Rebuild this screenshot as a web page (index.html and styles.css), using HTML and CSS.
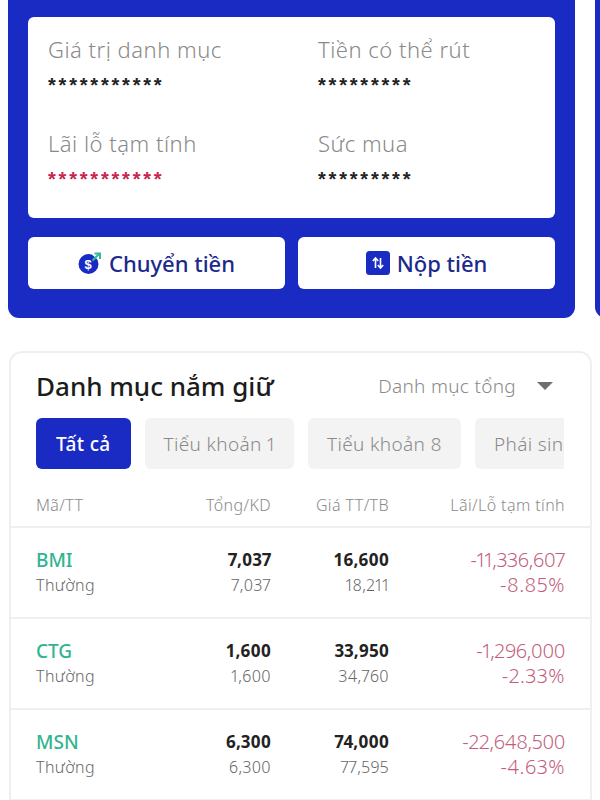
FILE: index.html
```html
<!DOCTYPE html>
<html lang="vi">
<head>
<meta charset="utf-8">
<title>Danh mục nắm giữ</title>
<link rel="stylesheet" href="styles.css">
</head>
<body>
<div class="carousel">
  <section class="blue">
    <div class="summary">
      <div class="stat"><div class="label">Giá trị danh mục</div><div class="mask">***********</div></div>
      <div class="stat"><div class="label">Tiền có thể rút</div><div class="mask">*********</div></div>
      <div class="stat"><div class="label">Lãi lỗ tạm tính</div><div class="mask red">***********</div></div>
      <div class="stat"><div class="label">Sức mua</div><div class="mask">*********</div></div>
    </div>
    <div class="actions">
      <button class="action">
        <svg class="ic" width="24" height="24" viewBox="0 0 24 24">
          <circle cx="10.5" cy="13" r="10" fill="#1a2bc4"/>
          <path d="M14 3.5h9v8z" fill="#fff"/>
          <path d="M14.5 9.5 L21 3 M16.5 2.5 H22 V8" fill="none" stroke="#35b89a" stroke-width="2"/>
          <text x="10" y="18" class="dollar">$</text>
        </svg>
        Chuyển tiền
      </button>
      <button class="action">
        <svg class="ic" width="24" height="24" viewBox="0 0 24 24">
          <rect x="0" y="0" width="24" height="24" rx="3.5" fill="#1a2bc4"/>
          <path d="M9.5 17V7.5M6.8 10 9.5 7l2.7 3M14.5 7v9.5M11.8 14l2.7 3 2.7-3" fill="none" stroke="#fff" stroke-width="1.6"/>
        </svg>
        Nộp tiền
      </button>
    </div>
  </section>
  <section class="blue"></section>
</div>

<section class="holdings">
  <div class="head">
    <h2 class="title">Danh mục nắm giữ</h2>
    <div class="picker">Danh mục tổng <span class="caret"></span></div>
  </div>
  <div class="tabs">
    <div class="tab on">Tất cả</div>
    <div class="tab">Tiểu khoản 1</div>
    <div class="tab">Tiểu khoản 8</div>
    <div class="tab">Phái sinh</div>
  </div>
  <div class="row colhead">
    <div>Mã/TT</div><div class="r">Tổng/KD</div><div class="r">Giá TT/TB</div><div class="r">Lãi/Lỗ tạm tính</div>
  </div>
  <div class="row item">
    <div><div class="sym">BMI</div><div class="sub">Thường</div></div>
    <div class="r"><div class="num">7,037</div><div class="sub">7,037</div></div>
    <div class="r"><div class="num">16,600</div><div class="sub">18,211</div></div>
    <div class="r pl"><div class="amt">-11,336,607</div><div class="pct">-8.85%</div></div>
  </div>
  <div class="row item">
    <div><div class="sym">CTG</div><div class="sub">Thường</div></div>
    <div class="r"><div class="num">1,600</div><div class="sub">1,600</div></div>
    <div class="r"><div class="num">33,950</div><div class="sub">34,760</div></div>
    <div class="r pl"><div class="amt">-1,296,000</div><div class="pct">-2.33%</div></div>
  </div>
  <div class="row item">
    <div><div class="sym">MSN</div><div class="sub">Thường</div></div>
    <div class="r"><div class="num">6,300</div><div class="sub">6,300</div></div>
    <div class="r"><div class="num">74,000</div><div class="sub">77,595</div></div>
    <div class="r pl"><div class="amt">-22,648,500</div><div class="pct">-4.63%</div></div>
  </div>
</section>
</body>
</html>
```
FILE: styles.css
```css
* { box-sizing: border-box; }
html, body { margin: 0; padding: 0; height: 800px; overflow: hidden; background: #fff; }
body { font-family: "Noto Sans", sans-serif; color: #222; font-variant-numeric: proportional-nums; }

.carousel { display: flex; gap: 20px; padding-left: 8px; overflow: hidden; height: 351px; align-items: flex-start; }
.blue { flex: 0 0 567px; height: 318px; background: #1a2bc4; border-radius: 0 0 11px 11px; padding: 17px 20px 0; }

.summary { background: #fff; border-radius: 6px; height: 201px; padding: 14px 20px 0; display: grid; grid-template-columns: 217px 217px; column-gap: 53px; grid-auto-rows: 94px; }
.label { font-size: 22px; letter-spacing: .5px; line-height: 36px; color: #8a8a8a; font-weight: 300; white-space: nowrap; }
.mask { font-family: "Liberation Sans", sans-serif; font-weight: 700; font-size: 20px; letter-spacing: 2.8px; line-height: 37px; height: 30px; color: #222; }
.mask.red { color: #c8244f; }

.actions { display: grid; grid-template-columns: 257px 257px; column-gap: 13px; margin-top: 19px; }
.action { height: 52px; border: 0; background: #fff; border-radius: 6px; display: flex; align-items: center; justify-content: center; gap: 7px; font: 500 22px "Noto Sans", sans-serif; color: #1b2a8c; padding: 0; }
.ic { flex: none; }
.dollar { font: 700 13px "Liberation Sans", sans-serif; fill: #fff; text-anchor: middle; }

.holdings { margin: 0 8px 0 9px; height: 460px; border: 2px solid #efefef; border-bottom-width: 0; border-radius: 13px 13px 0 0; padding-top: 14px; overflow: hidden; }
.head { display: flex; align-items: center; justify-content: space-between; padding: 0 37px 0 25px; height: 38px; }
.title { margin: 0; font-size: 26px; font-weight: 500; color: #1c1c1c; }
.picker { font-size: 19px; letter-spacing: .3px; font-weight: 300; color: #8a8a8a; display: flex; align-items: center; gap: 21px; }
.caret { width: 0; height: 0; border-left: 8px solid transparent; border-right: 8px solid transparent; border-top: 8px solid #6e6e6e; }

.tabs { display: flex; gap: 14px; margin: 13px 26px 0 25px; overflow: hidden; }
.tab { flex: none; height: 51px; padding: 0 19px; border-radius: 6px; background: #f3f3f3; color: #8a8a8a; font-size: 19px; letter-spacing: .35px; font-weight: 300; display: flex; align-items: center; white-space: nowrap; }
.tab.on { background: #1a2bc4; color: #fff; font-weight: 500; padding: 0 20px; }

.row { display: grid; grid-template-columns: 120px 115px 118px 176px; padding: 0 25px; align-items: start; }
.r { text-align: right; }
.colhead { height: 59px; align-items: center; padding-top: 14px; font-size: 16px; letter-spacing: .4px; font-weight: 300; color: #8a8a8a; border-bottom: 2px solid #efefef; white-space: nowrap; }
.item { height: 91px; padding-top: 19px; border-bottom: 2px solid #efefef; }
.sym { font-size: 19px; font-weight: 500; color: #2fb58f; line-height: 26px; }
.num { font-size: 17px; font-weight: 700; color: #222; line-height: 26px; }
.sub { font-size: 16px; letter-spacing: .4px; font-weight: 300; color: #666; line-height: 25px; white-space: nowrap; }
.pl { font-size: 20px; font-weight: 300; color: #c2607c; line-height: 25px; }
.amt { letter-spacing: -.3px; }
.pct { letter-spacing: .5px; }
```
